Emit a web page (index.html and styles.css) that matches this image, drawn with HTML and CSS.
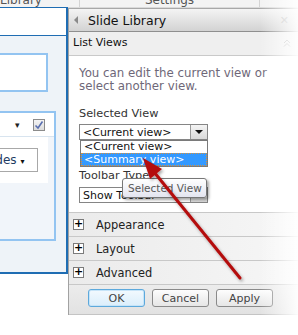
FILE: index.html
```html
<!DOCTYPE html>
<html lang="en">
<head>
  <meta charset="UTF-8">
  <title>Slide Library - List Views</title>
  <link rel="stylesheet" href="styles.css">
</head>
<body>

  <div class="topbar">
    <div class="tab tab-lib">Library</div>
    <div class="tab tab-set">Settings</div>
  </div>

  <div class="main">
    <div class="left">
      <div class="left-top"></div>
      <div class="left-body">
        <div class="thumb"></div>
        <div class="props">
          <div class="props-row">
            <span class="caret">&#9662;</span>
            <span class="check">
              <svg width="10" height="10" viewBox="0 0 10 10"><path d="M1.5 5.5 L4 8 L8.5 1.5" fill="none" stroke="#5a6fb0" stroke-width="1.6"/></svg>
            </span>
          </div>
          <div class="props-body">
            <div class="props-inner">
              <div class="mini-select">ides <span class="mini-caret">&#9662;</span></div>
            </div>
          </div>
        </div>
      </div>
    </div>

    <div class="panel">
      <div class="panel-head">
        <svg class="head-arrow" width="4" height="8" viewBox="0 0 4 8"><path d="M4 0 L0 4 L4 8 Z" fill="#8a8a8a"/></svg>
        <span class="head-title">Slide Library</span>
        <span class="head-close">&#10005;</span>
      </div>
      <div class="panel-sub">
        <span>List Views</span>
        <svg class="sub-chev" width="8" height="8" viewBox="0 0 8 8"><path d="M1 4 L4 1 L7 4 M1 7.5 L4 4.5 L7 7.5" fill="none" stroke="#b5b5b5" stroke-width="1"/></svg>
      </div>

      <div class="panel-body">
        <p class="desc">You can edit the current view or select another view.</p>

        <div class="field">
          <div class="label">Selected View</div>
          <div class="select">
            <span class="select-text">&lt;Current view&gt;</span>
            <span class="select-btn"><span class="tri"></span></span>
          </div>
          <div class="droplist">
            <div class="drop-item">&lt;Current view&gt;</div>
            <div class="drop-item selected">&lt;Summary view&gt;</div>
          </div>
        </div>

        <div class="field field-toolbar">
          <div class="label">Toolbar Type</div>
          <div class="select">
            <span class="select-text">Show Toolbar</span>
            <span class="select-btn"><span class="tri"></span></span>
          </div>
          <div class="tooltip">Selected View</div>
        </div>
      </div>

      <div class="section"><span class="plus">+</span>Appearance</div>
      <div class="section"><span class="plus">+</span>Layout</div>
      <div class="section"><span class="plus">+</span>Advanced</div>

      <div class="footer">
        <button class="btn btn-ok">OK</button>
        <button class="btn">Cancel</button>
        <button class="btn">Apply</button>
      </div>
    </div>
  </div>

  <div class="fade"></div>

  <svg class="arrow" width="298" height="335" viewBox="0 0 298 335">
    <defs>
      <filter id="shadow" x="-20%" y="-20%" width="140%" height="140%">
        <feDropShadow dx="1.5" dy="2" stdDeviation="1.5" flood-color="#000" flood-opacity="0.35"/>
      </filter>
    </defs>
    <g filter="url(#shadow)">
      <line x1="240" y1="278" x2="154" y2="172" stroke="#b40a0a" stroke-width="3" stroke-linecap="round"/>
      <path d="M143 158 L162 169 L150 179 Z" fill="#b40a0a"/>
    </g>
  </svg>

</body>
</html>
```

FILE: styles.css
```css
* { box-sizing: border-box; margin: 0; padding: 0; }
body {
  font-family: 'DejaVu Sans', Verdana, sans-serif;
  background: #fff;
  color: #333;
  width: 298px;
  height: 335px;
  overflow: hidden;
  position: relative;
}

/* top ribbon strip, mostly scrolled away */
.topbar {
  height: 8px;
  display: flex;
  background: #f3f3f3;
  border-bottom: 1px solid #dadada;
  overflow: hidden;
}
.tab {
  font-size: 12px;
  line-height: 12px;
  margin-top: -6px;
  color: #555;
  height: 14px;
}
.tab-lib { width: 80px; border-right: 1px solid #d4d4d4; }
.tab-set { width: 180px; text-align: center; border-right: 1px solid #d4d4d4; }

.main {
  display: flex;
  align-items: flex-start;
  margin-top: -1px;
}

/* left editing area */
.left {
  width: 68px;
  height: 267px;
  border-top: 1px solid #1f6db3;
  border-right: 2px solid #1f6db3;
  border-bottom: 2px solid #1f6db3;
  display: flex;
  flex-direction: column;
}
.left-top {
  height: 28px;
  background: #fff;
  border-bottom: 1px solid #1f6db3;
}
.left-body {
  flex: 1;
  background: #eef3f8;
  padding-top: 17px;
}
.thumb {
  width: 48px;
  height: 39px;
  background: #fff;
  border: 2px solid #93c4f1;
  border-left: 0;
}
.props {
  width: 56px;
  height: 130px;
  margin-top: 19px;
  border-top: 2px solid #93c4f1;
  border-right: 2px solid #93c4f1;
  border-bottom: 2px solid #93c4f1;
  display: flex;
  flex-direction: column;
}
.props-row {
  height: 24px;
  background: #fff;
  border-bottom: 1px solid #d8e4ef;
  display: flex;
  align-items: center;
  padding-left: 15px;
}
.caret { font-size: 9px; color: #222; width: 18px; }
.check {
  width: 12px;
  height: 12px;
  border: 1px solid #8b8b8b;
  background: linear-gradient(#f4f4f4, #dcdcdc);
  display: flex;
  align-items: center;
  justify-content: center;
}
.props-body {
  flex: 1;
  background: #f1f5fa;
}
.props-inner {
  width: 48px;
  height: 46px;
  background: #fff;
  padding-top: 11px;
}
.mini-select {
  width: 46px;
  height: 24px;
  border: 1px solid #a8a8a8;
  border-left: 0;
  background: #fff;
  color: #1e3b63;
  font-size: 12px;
  line-height: 23px;
  margin-left: -8px;
}
.mini-caret { font-size: 8px; color: #111; }

/* tool pane */
.panel {
  flex: 1;
  margin-top: 1px;
  border-left: 1px solid #a2a2a2;
  border-top: 1px solid #a8a8a8;
}
.panel-head {
  height: 23px;
  background: linear-gradient(#f4f4f4, #d3d3d3);
  border-bottom: 1px solid #8f8f8f;
  display: flex;
  align-items: center;
  padding-left: 5px;
}
.head-arrow { margin-right: 10px; }
.head-title { font-size: 12.5px; color: #111; flex: 1; }
.head-close { font-size: 11px; color: #b9b9b9; margin-right: 9px; }
.panel-sub {
  height: 24px;
  background: #efefef;
  border-bottom: 1px solid #c9c9c9;
  display: flex;
  align-items: center;
  justify-content: space-between;
  padding: 0 7px 2px 4px;
  font-size: 11px;
  color: #111;
}
.panel-body {
  padding: 11px 10px 11px;
  height: 156px;
}
.desc {
  font-size: 11.8px;
  line-height: 13px;
  color: #6e6778;
}
.field { position: relative; }
.label {
  font-size: 11.3px;
  line-height: 13px;
  color: #333;
  margin-top: 14px;
  margin-bottom: 4px;
}
.field-toolbar .label { margin-top: 29px; margin-bottom: 5px; }
.select {
  width: 129px;
  height: 16px;
  border: 1px solid #858585;
  display: flex;
  align-items: center;
  background: #fff;
}
.select-text {
  flex: 1;
  font-size: 11px;
  color: #111;
  padding-left: 3px;
  white-space: nowrap;
  overflow: hidden;
}
.select-btn {
  width: 17px;
  height: 14px;
  background: linear-gradient(#f4f4f4, #d9d9d9);
  border-left: 1px solid #9a9a9a;
  display: flex;
  align-items: center;
  justify-content: center;
}
.tri {
  width: 0;
  height: 0;
  border-left: 4px solid transparent;
  border-right: 4px solid transparent;
  border-top: 4px solid #111;
}
.droplist {
  position: absolute;
  left: 1px;
  top: 33px;
  width: 128px;
  background: #fff;
  border: 1px solid #7a7a7a;
  z-index: 5;
}
.drop-item {
  font-size: 11px;
  line-height: 12px;
  color: #111;
  padding-left: 3px;
  white-space: nowrap;
}
.drop-item.selected {
  background: #3399ff;
  color: #fff;
  line-height: 13px;
  outline: 1px dotted #d9913a;
  outline-offset: -1px;
}
.tooltip {
  position: absolute;
  left: 43px;
  top: 9px;
  width: 85px;
  height: 20px;
  border: 1px solid #777;
  border-radius: 3px;
  background: linear-gradient(#ffffff, #e4e5f0);
  box-shadow: 2px 2px 3px rgba(0,0,0,0.35);
  font-size: 10.5px;
  line-height: 18px;
  color: #575757;
  padding-left: 5px;
  white-space: nowrap;
  z-index: 6;
}

.section {
  height: 24px;
  border-top: 1px solid #c8c8c8;
  background: linear-gradient(to right, #ebebeb, #f6f6f6);
  display: flex;
  align-items: center;
  padding-left: 4px;
  font-size: 11.4px;
  color: #222;
}
.plus {
  width: 11px;
  height: 11px;
  border: 1px solid #7b7b7b;
  background: #fff;
  font-size: 11px;
  line-height: 8px;
  text-align: center;
  font-weight: bold;
  margin-right: 12px;
  color: #000;
}
.footer {
  height: 31px;
  border-top: 1px solid #c8c8c8;
  border-bottom: 1px solid #c4c4c4;
  background: linear-gradient(#ececec, #e2e2e2);
  display: flex;
  align-items: center;
  gap: 7px;
  padding-left: 19px;
  padding-bottom: 3px;
}
.btn {
  width: 57px;
  height: 18px;
  font-family: 'DejaVu Sans', Verdana, sans-serif;
  font-size: 11px;
  color: #444;
  border: 1px solid #8a8a8a;
  border-radius: 3px;
  background: linear-gradient(#fdfdfd, #e6e6e6);
}
.btn-ok {
  border-color: #5da9dc;
  background: linear-gradient(#f2f9fe, #dbeefb);
  box-shadow: inset 0 0 0 1px #c6e4f8;
}

.fade {
  position: absolute;
  top: 0;
  right: 0;
  width: 38px;
  height: 320px;
  background: linear-gradient(to right, rgba(255,255,255,0), rgba(255,255,255,0.92));
  pointer-events: none;
}
.arrow {
  position: absolute;
  left: 0;
  top: 0;
  pointer-events: none;
  z-index: 10;
}
```
